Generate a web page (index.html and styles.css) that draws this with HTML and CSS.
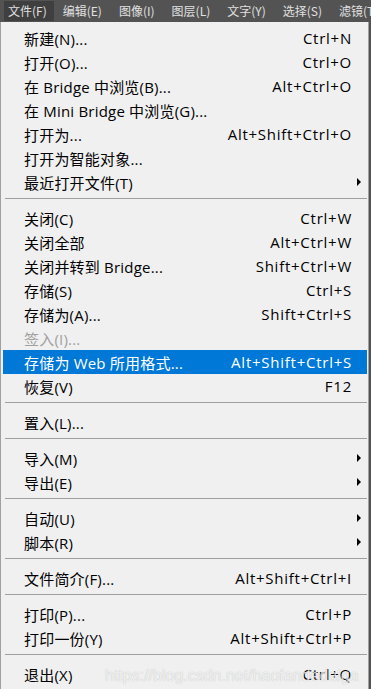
FILE: index.html
```html
<!DOCTYPE html>
<html lang="zh-CN">
<head>
  <meta charset="UTF-8">
  <meta name="viewport" content="width=device-width, initial-scale=1.0">
  <title>文件菜单</title>
  <link rel="stylesheet" href="styles.css">
</head>
<body>
  <div class="menubar">
    <span class="bar-item active">文件(F)</span>
    <span class="bar-item">编辑(E)</span>
    <span class="bar-item">图像(I)</span>
    <span class="bar-item">图层(L)</span>
    <span class="bar-item">文字(Y)</span>
    <span class="bar-item">选择(S)</span>
    <span class="bar-item">滤镜(T)</span>
  </div>

  <div class="menu">
    <div class="row"><span>新建(N)...</span><span class="key">Ctrl+N</span><span></span></div>
    <div class="row"><span>打开(O)...</span><span class="key">Ctrl+O</span><span></span></div>
    <div class="row"><span>在 Bridge 中浏览(B)...</span><span class="key">Alt+Ctrl+O</span><span></span></div>
    <div class="row"><span>在 Mini Bridge 中浏览(G)...</span><span class="key"></span><span></span></div>
    <div class="row"><span>打开为...</span><span class="key">Alt+Shift+Ctrl+O</span><span></span></div>
    <div class="row"><span>打开为智能对象...</span><span class="key"></span><span></span></div>
    <div class="row"><span>最近打开文件(T)</span><span class="key"></span><span class="arrow"></span></div>
    <div class="sep"></div>
    <div class="row"><span>关闭(C)</span><span class="key">Ctrl+W</span><span></span></div>
    <div class="row"><span>关闭全部</span><span class="key">Alt+Ctrl+W</span><span></span></div>
    <div class="row"><span>关闭并转到 Bridge...</span><span class="key">Shift+Ctrl+W</span><span></span></div>
    <div class="row"><span>存储(S)</span><span class="key">Ctrl+S</span><span></span></div>
    <div class="row"><span>存储为(A)...</span><span class="key">Shift+Ctrl+S</span><span></span></div>
    <div class="row disabled"><span>签入(I)...</span><span class="key"></span><span></span></div>
    <div class="row selected"><span>存储为 Web 所用格式...</span><span class="key">Alt+Shift+Ctrl+S</span><span></span></div>
    <div class="row"><span>恢复(V)</span><span class="key">F12</span><span></span></div>
    <div class="sep"></div>
    <div class="row"><span>置入(L)...</span><span class="key"></span><span></span></div>
    <div class="sep"></div>
    <div class="row"><span>导入(M)</span><span class="key"></span><span class="arrow"></span></div>
    <div class="row"><span>导出(E)</span><span class="key"></span><span class="arrow"></span></div>
    <div class="sep"></div>
    <div class="row"><span>自动(U)</span><span class="key"></span><span class="arrow"></span></div>
    <div class="row"><span>脚本(R)</span><span class="key"></span><span class="arrow"></span></div>
    <div class="sep"></div>
    <div class="row"><span>文件简介(F)...</span><span class="key">Alt+Shift+Ctrl+I</span><span></span></div>
    <div class="sep"></div>
    <div class="row"><span>打印(P)...</span><span class="key">Ctrl+P</span><span></span></div>
    <div class="row"><span>打印一份(Y)</span><span class="key">Alt+Shift+Ctrl+P</span><span></span></div>
    <div class="sep"></div>
    <div class="row"><span>退出(X)</span><span class="key">Ctrl+Q</span><span></span></div>

    <div class="watermark">https://blog.csdn.net/haofandedaiga</div>
  </div>
</body>
</html>
```

FILE: styles.css
```css
body {
  margin: 0;
  background: #535353;
  font-family: "Open Sans", "Noto Sans CJK SC", sans-serif;
  height: 689px;
  overflow: hidden;
}
.menubar {
  display: flex;
  height: 22px;
  align-items: center;
  padding-left: 4px;
  font-family: "Noto Sans CJK SC", sans-serif;
  font-size: 12px;
  color: #e0e0e0;
  white-space: nowrap;
}
.bar-item {
  padding: 1px 8px 2px 4px;
  margin-right: 5px;
}
.bar-item.active {
  background: #3f3f3f;
  padding: 1px 7px 2px 4px;
}
.menu {
  position: relative;
  width: 365px;
  height: 666px;
  background: #f0f0f0;
  border-left: 1px solid #a0a0a0;
  border-right: 1px solid #a0a0a0;
  padding: 4px 0 0 2px;
  box-sizing: content-box;
  color: #000;
  font-size: 15px;
  letter-spacing: 0.2px;
}
.row {
  display: grid;
  grid-template-columns: 1fr auto 16px;
  height: 24px;
  align-items: center;
  padding-left: 21px;
  margin-right: 1px;
  white-space: nowrap;
}
.row .key {
  text-align: right;
  letter-spacing: 0.75px;
  margin-right: -1px;
}
.row.disabled {
  color: #a0a0a0;
}
.row.selected {
  background: #0078d7;
  color: #fff;
}
.arrow {
  justify-self: center;
  width: 0;
  height: 0;
  border-top: 4px solid transparent;
  border-bottom: 4px solid transparent;
  border-left: 4px solid #000;
}
.sep {
  height: 1px;
  background: #a0a0a0;
  margin: 4px 1px 7px 2px;
}
.watermark {
  position: absolute;
  left: 104px;
  top: 645px;
  font-family: "Liberation Sans", Arial, sans-serif;
  font-size: 16px;
  letter-spacing: 0;
  color: rgba(255, 255, 255, 0.75);
  text-shadow: 0 0 1px rgba(0, 0, 0, 0.25);
  pointer-events: none;
}
```
